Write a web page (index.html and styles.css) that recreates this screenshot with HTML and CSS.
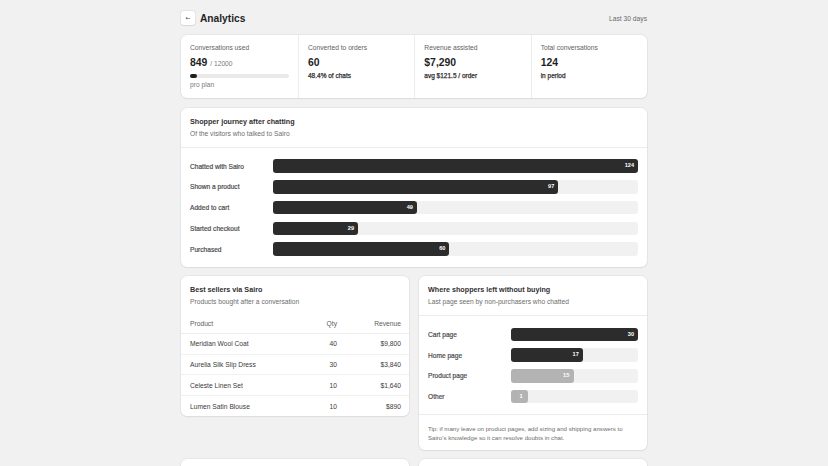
FILE: index.html
```html
<!DOCTYPE html>
<html lang="en">
<head>
    <meta charset="UTF-8">
    <meta name="viewport" content="width=device-width, initial-scale=1.0">
    <title>Analytics</title>
    <link rel="stylesheet" href="styles.css">
</head>
<body>
    <div class="page">
        <div class="page-header">
            <div class="title-wrap">
                <button class="back-btn">&larr;</button>
                <h1>Analytics</h1>
            </div>
            <span class="range">Last 30 days</span>
        </div>

        <div class="card stats">
            <div class="stat">
                <div class="stat-label">Conversations used</div>
                <div class="stat-value">849 <span class="stat-of">/ 12000</span></div>
                <div class="usage"><div class="usage-fill" style="width: 7.1%"></div></div>
                <div class="stat-note">pro plan</div>
            </div>
            <div class="stat">
                <div class="stat-label">Converted to orders</div>
                <div class="stat-value">60</div>
                <div class="stat-sub">48.4% of chats</div>
            </div>
            <div class="stat">
                <div class="stat-label">Revenue assisted</div>
                <div class="stat-value">$7,290</div>
                <div class="stat-sub">avg $121.5 / order</div>
            </div>
            <div class="stat">
                <div class="stat-label">Total conversations</div>
                <div class="stat-value">124</div>
                <div class="stat-sub">in period</div>
            </div>
        </div>

        <div class="card">
            <div class="card-head divided">
                <h2>Shopper journey after chatting</h2>
                <p>Of the visitors who talked to Sairo</p>
            </div>
            <div class="bars">
                <div class="bar-row">
                    <span class="bar-label">Chatted with Sairo</span>
                    <div class="bar-track"><div class="bar-fill" style="width: 100%">124</div></div>
                </div>
                <div class="bar-row">
                    <span class="bar-label">Shown a product</span>
                    <div class="bar-track"><div class="bar-fill" style="width: 78.2%">97</div></div>
                </div>
                <div class="bar-row">
                    <span class="bar-label">Added to cart</span>
                    <div class="bar-track"><div class="bar-fill" style="width: 39.5%">49</div></div>
                </div>
                <div class="bar-row">
                    <span class="bar-label">Started checkout</span>
                    <div class="bar-track"><div class="bar-fill" style="width: 23.4%">29</div></div>
                </div>
                <div class="bar-row">
                    <span class="bar-label">Purchased</span>
                    <div class="bar-track"><div class="bar-fill" style="width: 48.4%">60</div></div>
                </div>
            </div>
        </div>

        <div class="two-col">
            <div class="card">
                <div class="card-head">
                    <h2>Best sellers via Sairo</h2>
                    <p>Products bought after a conversation</p>
                </div>
                <table class="sellers">
                    <thead>
                        <tr><th>Product</th><th class="num">Qty</th><th class="num">Revenue</th></tr>
                    </thead>
                    <tbody>
                        <tr><td>Meridian Wool Coat</td><td class="num">40</td><td class="num">$9,800</td></tr>
                        <tr><td>Aurelia Silk Slip Dress</td><td class="num">30</td><td class="num">$3,840</td></tr>
                        <tr><td>Celeste Linen Set</td><td class="num">10</td><td class="num">$1,640</td></tr>
                        <tr><td>Lumen Satin Blouse</td><td class="num">10</td><td class="num">$890</td></tr>
                    </tbody>
                </table>
            </div>

            <div class="card">
                <div class="card-head divided">
                    <h2>Where shoppers left without buying</h2>
                    <p>Last page seen by non-purchasers who chatted</p>
                </div>
                <div class="bars">
                    <div class="bar-row">
                        <span class="bar-label">Cart page</span>
                        <div class="bar-track"><div class="bar-fill" style="width: 100%">30</div></div>
                    </div>
                    <div class="bar-row">
                        <span class="bar-label">Home page</span>
                        <div class="bar-track"><div class="bar-fill" style="width: 56.7%">17</div></div>
                    </div>
                    <div class="bar-row">
                        <span class="bar-label">Product page</span>
                        <div class="bar-track"><div class="bar-fill muted" style="width: 50%">15</div></div>
                    </div>
                    <div class="bar-row">
                        <span class="bar-label">Other</span>
                        <div class="bar-track"><div class="bar-fill muted" style="width: 3.3%">1</div></div>
                    </div>
                </div>
                <div class="tip">Tip: if many leave on product pages, add sizing and shipping answers to Sairo's knowledge so it can resolve doubts in chat.</div>
            </div>

            <div class="card blank"></div>
            <div class="card blank"></div>
        </div>
    </div>
</body>
</html>
```

FILE: styles.css
```css
body {
    margin: 0;
    background: #f1f1f1;
    font-family: "Liberation Sans", Arial, sans-serif;
    color: #303030;
}
.page {
    width: 466px;
    margin: 0 auto;
    padding-top: 11px;
    display: flex;
    flex-direction: column;
    gap: 9.4px;
}
.page-header {
    display: flex;
    align-items: center;
    justify-content: space-between;
    height: 14px;
    margin-bottom: 0.6px;
}
.title-wrap {
    display: flex;
    align-items: center;
    gap: 5px;
}
.back-btn {
    width: 14px;
    height: 14px;
    padding: 0;
    border: none;
    border-radius: 3px;
    background: white;
    box-shadow: 0 0 0 1px rgba(0,0,0,0.05), 0 1px 1px rgba(0,0,0,0.06);
    color: #555;
    font-size: 6px;
    line-height: 14px;
    font-family: "DejaVu Sans", sans-serif;
}
h1 {
    margin: 0;
    font-size: 10.2px;
    font-weight: bold;
    color: #1f1f1f;
}
.range {
    font-size: 6.7px;
    color: #6b6b6b;
}
.card {
    background: white;
    border-radius: 6px;
    box-shadow: 0 0 0 1px rgba(0,0,0,0.04), 0 1px 2px rgba(0,0,0,0.05);
}
.stats {
    display: grid;
    grid-template-columns: repeat(4, 1fr);
}
.stat {
    padding: 8px 9px 9.6px;
    border-left: 1px solid #ececec;
}
.stat:first-child {
    border-left: none;
}
.stat-label {
    font-size: 6.7px;
    line-height: 9px;
    color: #616161;
}
.stat-value {
    margin-top: 4px;
    height: 13px;
    font-size: 10.4px;
    line-height: 13px;
    font-weight: bold;
    color: #1f1f1f;
}
.stat-of {
    font-size: 6.7px;
    line-height: 1;
    font-weight: normal;
    color: #7a7a7a;
}
.usage {
    margin-top: 4.7px;
    width: 99px;
    height: 4px;
    border-radius: 2px;
    background: #e9e9e9;
}
.usage-fill {
    height: 100%;
    border-radius: 2px;
    background: #1f1f1f;
}
.stat-note {
    margin-top: 2px;
    font-size: 6.7px;
    line-height: 9px;
    color: #7a7a7a;
}
.stat-sub {
    margin-top: 2.4px;
    font-size: 6.5px;
    line-height: 9px;
    color: #303030;
    -webkit-text-stroke: 0.25px #303030;
}
.card-head {
    padding: 9.2px 9px 6.2px;
}
.card-head.divided {
    padding-bottom: 8.3px;
    border-bottom: 1px solid #ececec;
}
h2 {
    margin: 0;
    font-size: 7.2px;
    line-height: 10px;
    font-weight: bold;
    color: #303030;
}
.card-head p {
    margin: 1.8px 0 0;
    font-size: 6.7px;
    line-height: 10px;
    color: #6e6e6e;
}
.bars {
    padding: 11.4px 9px 10.8px;
    display: flex;
    flex-direction: column;
    gap: 7.4px;
}
.bar-row {
    height: 13.4px;
    display: grid;
    grid-template-columns: 82.6px 1fr;
    align-items: center;
}
.bar-label {
    font-size: 6.6px;
    line-height: 9px;
    color: #4d4d4d;
    -webkit-text-stroke: 0.2px #4d4d4d;
}
.bar-track {
    height: 13.4px;
    border-radius: 3px;
    background: #f1f1f1;
}
.bar-fill {
    height: 100%;
    min-width: 17px;
    box-sizing: border-box;
    padding-right: 4px;
    border-radius: 3px;
    background: #2c2c2c;
    color: white;
    font-size: 5.6px;
    font-weight: bold;
    line-height: 13.4px;
    text-align: right;
}
.bar-fill.muted {
    background: #b3b3b3;
    padding-right: 5px;
}
.two-col {
    display: grid;
    grid-template-columns: 1fr 1fr;
    gap: 9.4px 10px;
    align-items: start;
}
.blank {
    height: 60px;
}
.sellers {
    width: 100%;
    border-collapse: collapse;
    font-size: 6.7px;
}
.sellers th {
    height: 19.6px;
    padding: 0 8px 0 9px;
    text-align: left;
    font-weight: normal;
    color: #5c5c5c;
    border-bottom: 1px solid #ececec;
}
.sellers td {
    height: 19.8px;
    padding: 0 8px 0 9px;
    color: #3a3a3a;
    border-top: 1px solid #f1f1f1;
}
.sellers tbody tr:first-child td {
    border-top: none;
}
.sellers .num {
    text-align: right;
}
.sellers th.num:nth-child(2),
.sellers td.num:nth-child(2) {
    width: 30px;
}
.sellers th.num:last-child,
.sellers td.num:last-child {
    width: 47px;
}
.tip {
    padding: 8.6px 9px 7.6px;
    border-top: 1px solid #ececec;
    font-size: 6.1px;
    line-height: 9.3px;
    color: #6e6e6e;
}
```
